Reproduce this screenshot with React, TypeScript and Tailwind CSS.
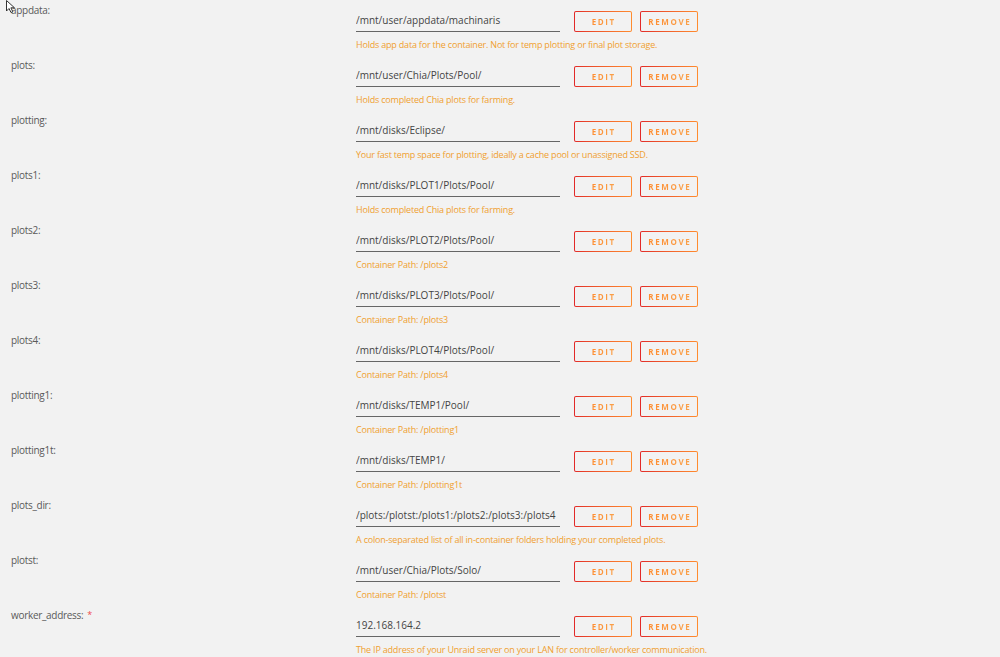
import React from "react";

type Row = { label: string; value: string; help: string; required?: boolean };

const rows: Row[] = [
  { label: "appdata:", value: "/mnt/user/appdata/machinaris", help: "Holds app data for the container. Not for temp plotting or final plot storage." },
  { label: "plots:", value: "/mnt/user/Chia/Plots/Pool/", help: "Holds completed Chia plots for farming." },
  { label: "plotting:", value: "/mnt/disks/Eclipse/", help: "Your fast temp space for plotting, ideally a cache pool or unassigned SSD." },
  { label: "plots1:", value: "/mnt/disks/PLOT1/Plots/Pool/", help: "Holds completed Chia plots for farming." },
  { label: "plots2:", value: "/mnt/disks/PLOT2/Plots/Pool/", help: "Container Path: /plots2" },
  { label: "plots3:", value: "/mnt/disks/PLOT3/Plots/Pool/", help: "Container Path: /plots3" },
  { label: "plots4:", value: "/mnt/disks/PLOT4/Plots/Pool/", help: "Container Path: /plots4" },
  { label: "plotting1:", value: "/mnt/disks/TEMP1/Pool/", help: "Container Path: /plotting1" },
  { label: "plotting1t:", value: "/mnt/disks/TEMP1/", help: "Container Path: /plotting1t" },
  { label: "plots_dir:", value: "/plots:/plotst:/plots1:/plots2:/plots3:/plots4", help: "A colon-separated list of all in-container folders holding your completed plots." },
  { label: "plotst:", value: "/mnt/user/Chia/Plots/Solo/", help: "Container Path: /plotst" },
  { label: "worker_address:", value: "192.168.164.2", help: "The IP address of your Unraid server on your LAN for controller/worker communication.", required: true },
];

function GButton({ text }: { text: string }) {
  return (
    <div className="h-[21px] w-[58px] rounded-[2px] p-px bg-gradient-to-r from-[#e22828] to-[#ff8c2f]">
      <div className="h-full w-full rounded-[1px] bg-[#f2f2f2] flex items-center justify-center">
        <span className="text-[8px] font-bold tracking-[1.6px] leading-none bg-gradient-to-r from-[#ff8c2f] to-[#f9a14b] bg-clip-text text-transparent pl-[1.6px]">
          {text}
        </span>
      </div>
    </div>
  );
}

export default function App() {
  return (
    <div
      className="relative w-[1000px] h-[657px] overflow-hidden bg-[#f2f2f2]"
      style={{ fontFamily: '"Open Sans", "Liberation Sans", sans-serif' }}
    >
      <svg className="absolute left-[6px] top-0" width="13" height="14" viewBox="0 0 13 14">
        <path d="M0.5 0.5 L0.5 11 L3 8.5 L5 12.5 L6.8 11.7 L4.9 7.8 L8.5 7.8 Z" fill="#fff" stroke="#333" strokeWidth="1" />
      </svg>
      {rows.map((r) => (
        <div key={r.label} className="flex h-[55px]">
          <div className="w-[356px] pl-[11px] pt-[3px] text-[10px] leading-[14px] tracking-[-0.3px] text-[#5a5a5a]">
            {r.label}
            {r.required && <span className="text-[#f0494d] ml-[4px] text-[9px] align-top">*</span>}
          </div>
          <div className="flex flex-col">
            <div className="flex items-start">
              <div className="mt-[10px] h-[22px] w-[204px] border-b border-[#666] flex items-center text-[10px] text-[#444] whitespace-nowrap overflow-hidden">
                {r.value}
              </div>
              <div className="mt-[11px] ml-[14px] flex gap-[8px]">
                <GButton text="EDIT" />
                <GButton text="REMOVE" />
              </div>
            </div>
            <div className="mt-[6px] text-[9px] leading-[14px] tracking-[-0.2px] text-[#f0a030] whitespace-nowrap">{r.help}</div>
          </div>
        </div>
      ))}
    </div>
  );
}
